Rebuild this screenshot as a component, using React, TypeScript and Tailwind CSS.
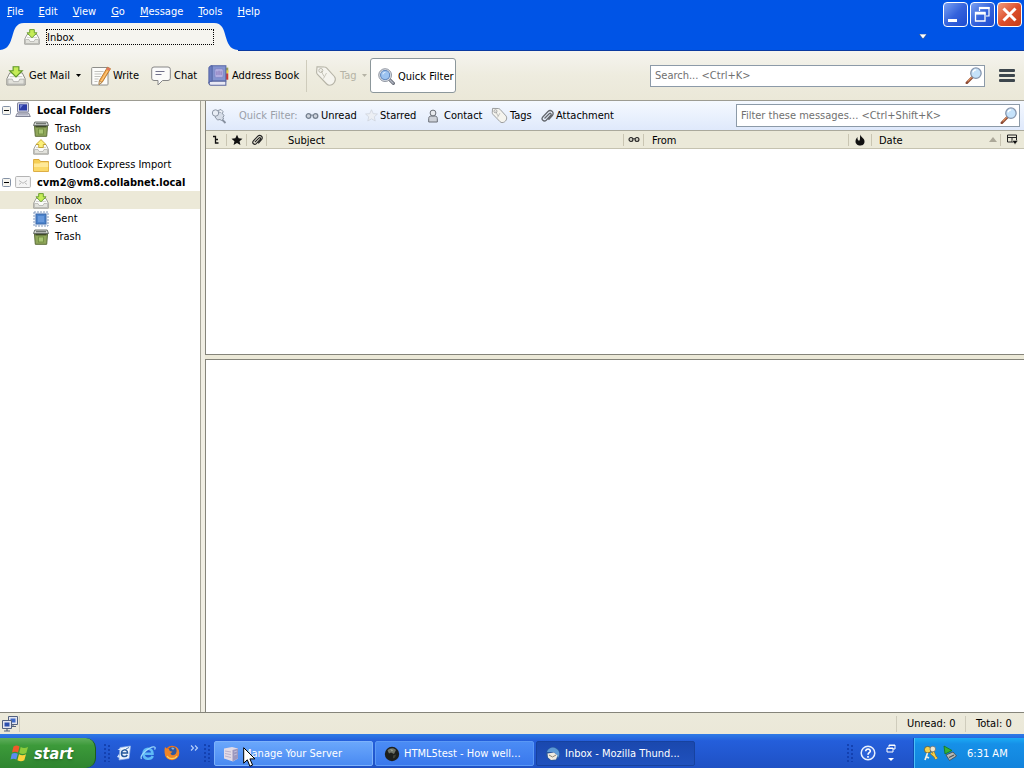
import { ReactNode } from 'react'
import clsx from 'clsx'

type IconProps = { className?: string }

function TrayIcon({ className, up }: IconProps & { up?: boolean }) {
  return (
    <svg viewBox="0 0 16 16" className={clsx('shrink-0', className)} aria-hidden>
      <path d="M3 5.500h10l2.300 4.700v5H.7v-5z" fill="#fafaf8" stroke="#8c8c86" strokeWidth=".8" />
      <path d="M1.500 10.500h3.500l1 2h4l1-2h3.500v4h-13z" fill="#e2e2dc" stroke="#a3a39d" strokeWidth=".6" />
      <path d="M3 8.500h10" stroke="#c4c4be" strokeWidth=".7" />
      {up ? (
        <path d="M8 .6l5 4.900h-2.700v3H5.700v-3H3z" fill="#fbef78" stroke="#bf9a22" strokeWidth=".8" />
      ) : (
        <path d="M5.700.600h4.600v3.200H13L8 8.800 3 3.800h2.700z" fill="#c5ec58" stroke="#5d9626" strokeWidth=".9" />
      )}
    </svg>
  )
}

function TrashIcon({ className }: IconProps) {
  return (
    <svg viewBox="0 0 16 16" className={clsx('shrink-0', className)} aria-hidden>
      <path d="M1.500 5h13l-.8 10.300H2.300z" fill="#8fa65a" stroke="#5b6c38" />
      <path d="M2.500 5.700h11" stroke="#3e4a28" strokeWidth="1.400" />
      <rect x="5.500" y="8" width="5" height="5" fill="#a9c574" stroke="#6d8a3e" strokeWidth=".8" />
      <path d="M.5 4.500L1.800 1h12.400l1.300 3.500z" fill="#d3d6d3" stroke="#5e645e" strokeWidth=".9" />
      <path d="M3 2.700h10" stroke="#666c66" strokeWidth="1.200" />
    </svg>
  )
}

function FolderIcon({ className }: IconProps) {
  return (
    <svg viewBox="0 0 16 16" className={clsx('shrink-0', className)} aria-hidden>
      <path d="M.6 14.400V2.500h5.400l1.500 2h8v9.900z" fill="#f6cf55" stroke="#d6a02d" strokeWidth=".9" />
      <path d="M1 6.500h5.500l1.500-1h7.300V10H1z" fill="#ffe998" />
      <path d="M1 10h14.300v4H1z" fill="#fbd968" />
    </svg>
  )
}

function SentIcon({ className }: IconProps) {
  return (
    <svg viewBox="0 0 16 16" className={clsx('shrink-0', className)} aria-hidden>
      <rect x="1" y="1" width="14" height="14" fill="#eef3fa" stroke="#8098bc" strokeDasharray="2 1" />
      <rect x="3" y="3" width="10" height="10" fill="#4b83cc" stroke="#3a68aa" />
      <rect x="5" y="5" width="6" height="6" fill="#6698dc" />
    </svg>
  )
}

function ComputerIcon({ className }: IconProps) {
  return (
    <svg viewBox="0 0 16 16" className={clsx('shrink-0', className)} aria-hidden>
      <rect x="2.500" y=".8" width="11" height="9.200" rx=".6" fill="#d9dbe8" stroke="#74778e" strokeWidth=".9" />
      <rect x="4" y="2.300" width="8" height="6.200" fill="#2b3ca6" />
      <path d="M5 3h3L5 7z" fill="#6f80d4" />
      <path d="M2.500 11h11l1.800 3.500H.7z" fill="#dcdde6" stroke="#74768a" strokeWidth=".9" />
      <path d="M3 12.800h10" stroke="#9fa1b4" />
    </svg>
  )
}

function EnvelopeIcon({ className }: IconProps) {
  return (
    <svg viewBox="0 0 16 16" className={clsx('shrink-0', className)} aria-hidden>
      <rect x=".6" y="2.500" width="14.800" height="11" rx="1" fill="#f5f5f5" stroke="#b4b4b4" />
      <path d="M4 6.500l4 2.800 4-2.800M4 10.500l2-1.500M12 10.500L10 9" fill="none" stroke="#bcbcbc" />
    </svg>
  )
}

function WriteIcon({ className }: IconProps) {
  return (
    <svg viewBox="0 0 20 20" className={clsx('shrink-0', className)} aria-hidden>
      <rect x=".7" y="1.500" width="16.300" height="17.500" rx=".8" fill="#fcfcfa" stroke="#8e8e8a" />
      <path d="M3.500 5.500h9M3.500 8h7M3.500 10.500h6M3.500 13h4M3.500 15.500h3" stroke="#c2c2be" />
      <path d="M16.500 1.200l3 1.500-8.300 13.600-3.200 2.200.4-3.800z" fill="#f7a848" stroke="#a96a20" strokeWidth=".8" />
      <path d="M16.500 1.200l3 1.500-1.300 2.100-2.900-1.600z" fill="#df7560" />
      <path d="M16.500 5L10 15.500" stroke="#fcd391" strokeWidth=".9" />
      <path d="M8 18.500l.4-3.500 2.600 1.300z" fill="#f6dfb8" stroke="#8a6a40" strokeWidth=".5" />
    </svg>
  )
}

function ChatIcon({ className }: IconProps) {
  return (
    <svg viewBox="0 0 20 20" className={clsx('shrink-0', className)} aria-hidden>
      <path
        d="M3 1h14a2.300 2.300 0 0 1 2.300 2.300v8.900A2.300 2.300 0 0 1 17 14.500h-5.500L7 19v-4.500H3a2.300 2.300 0 0 1-2.300-2.300V3.300A2.300 2.300 0 0 1 3 1z"
        fill="#fbfbfa"
        stroke="#868686"
      />
      <path d="M4.500 5.500h9M4.500 8.500h6" stroke="#70708a" strokeWidth="1.200" />
    </svg>
  )
}

function BookIcon({ className }: IconProps) {
  return (
    <svg viewBox="0 0 20 20" className={clsx('shrink-0', className)} aria-hidden>
      <path d="M16.500 2.500h2.800V7h-2.800z" fill="#9aa05a" />
      <path d="M16.500 5h2.800v3h-2.800z" fill="#ecd53c" />
      <path d="M16.500 8h2.800v6h-2.800z" fill="#cf3b34" />
      <path d="M3 .8h14v14.500H3z" fill="#8494cf" stroke="#5566a6" />
      <path d="M2.500 15.500c-2 0-2 3.700 0 3.700H17v-3.700z" fill="#e9e9f4" stroke="#5c689f" />
      <path d="M.8 2.800C.8 1.500 2 .8 4 .8V15.300C2 15.300.8 16 .8 17.500z" fill="#6b7cbf" stroke="#5061a0" strokeWidth=".8" />
      <rect x="6.500" y="3.500" width="8" height="8.500" rx="1.500" fill="#b2aee0" stroke="#7e84c4" strokeWidth=".7" />
      <path d="M8.500 6v3.500M10.500 5.500v4M12.500 6v3.500" stroke="#8a76b8" strokeWidth=".9" />
    </svg>
  )
}

function TagIcon({ className }: IconProps) {
  return (
    <svg viewBox="0 0 22 22" className={clsx('shrink-0', className)} aria-hidden>
      <path
        d="M2 1.800l7.500.2c1 0 1.600.4 2.300 1.100l7.600 8.400c2.400 3-.2 8.700-5.200 8.700-1 0-1.800-.5-2.500-1.200L2.500 9.500C1.900 8.800 1.600 8.200 1.600 7.300z"
        fill="#f5f4ee"
        stroke="currentColor"
        strokeWidth="1.100"
      />
      <circle cx="5.800" cy="5.500" r="2" fill="none" stroke="currentColor" strokeWidth=".9" />
      <path d="M6 5.500l3 6M11.500 8L8.500 13.500" stroke="currentColor" strokeWidth=".7" />
    </svg>
  )
}

function GlassIcon({ className }: IconProps) {
  return (
    <svg viewBox="0 0 16 16" className={clsx('shrink-0', className)} aria-hidden>
      <path d="M10.500 10.500l4 4" stroke="#6a6f7a" strokeWidth="3" strokeLinecap="round" />
      <path d="M11 11l3.300 3.300" stroke="#b3b8c4" strokeWidth="1.200" strokeLinecap="round" />
      <circle cx="6.700" cy="6.700" r="6" fill="#e2e5ea" stroke="#858c98" strokeWidth=".9" />
      <circle cx="6.700" cy="6.700" r="4.300" fill="#9cc3f0" stroke="#5f86bd" />
      <path d="M4.500 6a2.500 2.500 0 0 1 2.500-2" fill="none" stroke="#dcecfc" />
    </svg>
  )
}

function SearchIcon({ className }: IconProps) {
  return (
    <svg viewBox="0 0 16 16" className={clsx('shrink-0', className)} aria-hidden>
      <path d="M7 9.500L1.700 15" stroke="#8a4a35" strokeWidth="2.400" strokeLinecap="round" />
      <path d="M6.500 9.500l-4 4" stroke="#e08e58" strokeWidth="1" />
      <circle cx="10.300" cy="5.800" r="4.900" fill="#c5e2fa" stroke="#8595ad" strokeWidth="1.200" />
      <path d="M7.500 5a3 3 0 0 1 3-2.200" fill="none" stroke="#fff" strokeWidth="1.200" />
    </svg>
  )
}

function PinIcon({ className }: IconProps) {
  return (
    <svg viewBox="0 0 16 16" className={clsx('shrink-0', className)} aria-hidden>
      <path d="M9.500 10l5 5" stroke="#8791a0" strokeWidth="1.800" />
      <path
        d="M6.500 3.500l4 1 2.500 3-1 2 .5 1.500-2 1.500-1.500-1-2.500.5-2.500-3z"
        fill="#d6dde8"
        stroke="#8b95a4"
      />
      <circle cx="4.500" cy="5" r="3.200" fill="#e8edf5" stroke="#8b95a4" />
      <path d="M7 2.500l3-1 2 2-.5 2" fill="#eef2f8" stroke="#8b95a4" />
    </svg>
  )
}

function GlassesIcon({ className }: IconProps) {
  return (
    <svg viewBox="0 0 14 8" className={clsx('shrink-0', className)} aria-hidden>
      <circle cx="3.500" cy="4" r="2.300" fill="#8884" stroke="currentColor" strokeWidth="1.300" />
      <circle cx="10.500" cy="4" r="2.300" fill="#8884" stroke="currentColor" strokeWidth="1.300" />
      <path d="M5.500 3.500q1.500-1.200 3 0" fill="none" stroke="currentColor" />
    </svg>
  )
}

function StarIcon({ className, outline = 'none' }: IconProps & { outline?: string }) {
  return (
    <svg viewBox="0 0 14 14" className={clsx('shrink-0', className)} aria-hidden>
      <path
        d="M7 .8l1.900 4.200 4.500.4-3.400 3 1 4.500L7 10.600l-4 2.300 1-4.500L.6 5.400 5.100 5z"
        fill="currentColor"
        stroke={outline}
        strokeWidth=".8"
      />
    </svg>
  )
}

function PersonIcon({ className }: IconProps) {
  return (
    <svg viewBox="0 0 12 14" className={clsx('shrink-0', className)} aria-hidden>
      <path d="M1.700 13V9.500c0-1.600 1-2.500 2.300-2.500h4c1.300 0 2.300.9 2.300 2.500V13z" fill="#cdd1d8" stroke="#6a6f77" />
      <circle cx="6" cy="4" r="2.900" fill="#e8eaee" stroke="#6a6f77" />
    </svg>
  )
}

function ClipIcon({ className }: IconProps) {
  return (
    <svg viewBox="0 0 14 14" className={clsx('shrink-0', className)} aria-hidden>
      <path
        d="M4.500 9.500L9.200 4.800c1.200-1.200 2.800.2 1.600 1.500l-4.600 4.900C4 13.300.6 10.600 2.800 8L8 2.500c2.700-2.500 6.500.8 4.500 3.800L8.500 10.800"
        fill="none"
        stroke="currentColor"
        strokeWidth="1.300"
      />
    </svg>
  )
}

function Caret({ className }: IconProps) {
  return (
    <svg viewBox="0 0 5 3" className={clsx('h-[3px] w-[5px] shrink-0', className)} aria-hidden>
      <path d="M0 0h5L2.500 3z" fill="currentColor" />
    </svg>
  )
}

const menus = ['File', 'Edit', 'View', 'Go', 'Message', 'Tools', 'Help']

function CaptionButton({ label, close, children }: { label: string; close?: boolean; children: ReactNode }) {
  return (
    <button
      type="button"
      aria-label={label}
      className={clsx(
        'flex h-[25px] w-[25px] items-center justify-center rounded-[4px] border border-white bg-linear-to-br',
        close ? 'from-[#f09a7c] via-[#dd4f2c] to-[#c33c17]' : 'from-[#7ba0f2] via-[#3563dc] to-[#1c4bd0]',
      )}
    >
      <svg viewBox="0 0 23 23" className="h-[23px] w-[23px]" aria-hidden>
        {children}
      </svg>
    </button>
  )
}

function TitleBar() {
  return (
    <header className="flex h-[51px] justify-between bg-linear-to-t from-[#0a3aa0] from-[1px] to-[#0054e6] to-[1px]">
      <div className="flex flex-col justify-between">
        <nav className="flex h-[22px] items-center gap-[15px] pl-[7px] text-white">
          {menus.map((menu) => (
            <button key={menu} type="button">
              <u>{menu[0]}</u>
              {menu.slice(1)}
            </button>
          ))}
        </nav>
        <div className="flex h-7">
          <svg viewBox="0 0 24 28" className="h-7 w-6" aria-hidden>
            <path d="M0 28V27C17 26 8 0 24 0V28z" fill="#f5f4ef" />
          </svg>
          <button type="button" className="flex w-[190px] items-center gap-[6px] bg-[#f5f4ef] text-left">
            <TrayIcon className="h-4 w-4" />
            <span className="h-4 w-[168px] border border-dotted border-black leading-[15px]">Inbox</span>
          </button>
          <svg viewBox="0 0 24 28" className="h-7 w-6" aria-hidden>
            <path d="M0 0C16 0 7 26 24 27V28H0z" fill="#f5f4ef" />
          </svg>
        </div>
      </div>
      <div className="flex items-start pr-[2px] pt-[2px]">
        <button type="button" aria-label="List all tabs" className="mr-4 mt-8 text-white">
          <svg viewBox="0 0 8 5" className="h-[5px] w-2" aria-hidden>
            <path d="M0 0h8L4 5z" fill="#fff" stroke="#103a80" strokeWidth=".6" />
          </svg>
        </button>
        <div className="flex gap-[2px]">
          <CaptionButton label="Minimize">
            <path d="M4 16h9v3H4z" fill="#fff" />
          </CaptionButton>
          <CaptionButton label="Restore">
            <path d="M8.500 8V4.500h9.500V13H15" fill="none" stroke="#fff" strokeWidth="1.200" />
            <path d="M8 5h10.500" stroke="#fff" strokeWidth="2.200" />
            <path d="M4.500 9.500H14V18H4.500z" fill="none" stroke="#fff" strokeWidth="1.300" />
            <path d="M4 10.500h10.500" stroke="#fff" strokeWidth="2.200" />
          </CaptionButton>
          <CaptionButton label="Close" close>
            <path d="M5.500 5.500l12 12M17.500 5.500l-12 12" stroke="#fff" strokeWidth="3" />
          </CaptionButton>
        </div>
      </div>
    </header>
  )
}

function SearchBox({ label, className }: { label: string; className: string }) {
  return (
    <label className={clsx('flex items-center border border-[#8c9aa8] bg-white pl-[4px] pr-[2px]', className)}>
      <input
        type="search"
        aria-label={label}
        placeholder={label}
        className="min-w-0 flex-1 outline-none placeholder:text-[#707070]"
      />
      <SearchIcon className="h-[17px] w-[17px]" />
    </label>
  )
}

function Toolbar() {
  return (
    <div className="flex h-[50px] items-center border-b border-[#9d9c92] bg-linear-to-b from-[#f5f4ef] via-[#eeecdf] to-[#ebe8d8] pl-[6px] pr-[9px]">
      <button type="button" className="flex w-[70px] items-center gap-[3px]">
        <TrayIcon className="h-5 w-5" />
        Get Mail
      </button>
      <button type="button" aria-label="Get mail options" className="mr-[10px]">
        <Caret />
      </button>
      <button type="button" className="flex w-[60px] items-center gap-[2px]">
        <WriteIcon className="h-5 w-5" />
        Write
      </button>
      <button type="button" className="flex w-[57px] items-center gap-[3px]">
        <ChatIcon className="h-5 w-5" />
        Chat
      </button>
      <button type="button" className="flex w-[98px] items-center gap-[3px] whitespace-nowrap">
        <BookIcon className="h-[21px] w-[21px]" />
        Address Book
      </button>
      <div className="mr-2 h-8 w-px bg-[#cfccbc]" />
      <button type="button" disabled className="flex w-[55px] items-center gap-[3px] text-[#b5b3a6]">
        <TagIcon className="h-[22px] w-[22px]" />
        <span className="mr-[2px]">Tag</span>
        <Caret />
      </button>
      <button
        type="button"
        aria-pressed="true"
        className="flex h-[35px] w-[86px] items-center gap-[3px] whitespace-nowrap rounded-[3px] border border-[#8c979b] bg-white pl-[7px] pt-px"
      >
        <GlassIcon className="h-[17px] w-[17px]" />
        Quick Filter
      </button>
      <SearchBox label="Search... &lt;Ctrl+K&gt;" className="ml-auto h-[22px] w-[335px]" />
      <button type="button" aria-label="Menu" className="ml-[14px] flex w-4 flex-col gap-[2px]">
        <span className="h-[3px] w-full rounded-[1px] bg-[#3d464d]" />
        <span className="h-[3px] w-full rounded-[1px] bg-[#3d464d]" />
        <span className="h-[3px] w-full rounded-[1px] bg-[#3d464d]" />
      </button>
    </div>
  )
}

const accounts = [
  {
    name: 'Local Folders',
    icon: <ComputerIcon className="h-4 w-4" />,
    folders: [
      { name: 'Trash', icon: <TrashIcon className="h-4 w-4" /> },
      { name: 'Outbox', icon: <TrayIcon up className="h-4 w-4" /> },
      { name: 'Outlook Express Import', icon: <FolderIcon className="h-4 w-4" /> },
    ],
  },
  {
    name: 'cvm2@vm8.collabnet.local',
    icon: <EnvelopeIcon className="h-4 w-4" />,
    folders: [
      { name: 'Inbox', icon: <TrayIcon className="h-4 w-4" />, selected: true },
      { name: 'Sent', icon: <SentIcon className="h-4 w-4" /> },
      { name: 'Trash', icon: <TrashIcon className="h-4 w-4" /> },
    ],
  },
]

function FolderPane() {
  return (
    <aside className="w-[201px] shrink-0 border-r border-[#a5a497] bg-white">
      {accounts.map((account) => (
        <section key={account.name}>
          <div className="flex h-[18px] items-center pl-[2px]">
            <button type="button" aria-label={`Collapse ${account.name}`} className="mr-1">
              <svg viewBox="0 0 9 9" className="h-[9px] w-[9px]" aria-hidden>
                <rect x=".5" y=".5" width="8" height="8" rx="1" fill="#f6f5ef" stroke="#8492a6" />
                <path d="M2 4.500h5" stroke="#000" />
              </svg>
            </button>
            {account.icon}
            <span className="ml-[6px] whitespace-nowrap pt-px font-bold">{account.name}</span>
          </div>
          <ul>
            {account.folders.map((folder) => (
              <li
                key={folder.name}
                className={clsx(
                  'flex h-[18px] items-center gap-[6px] pl-[33px] pt-px',
                  'selected' in folder && 'bg-[#ece9d8]',
                )}
              >
                {folder.icon}
                {folder.name}
              </li>
            ))}
          </ul>
        </section>
      ))}
    </aside>
  )
}

function QuickFilterBar() {
  return (
    <div className="flex h-[29px] items-center bg-linear-to-b from-[#f5f9ff] to-[#dfe9fb] pl-[5px] pr-1">
      <button type="button" aria-label="Keep filters applied" className="mr-3">
        <PinIcon className="h-4 w-4" />
      </button>
      <span className="w-[66px] whitespace-nowrap text-[#9a9fa8]">Quick Filter:</span>
      <button type="button" className="flex w-[60px] items-center gap-[2px]">
        <GlassesIcon className="h-2 w-[14px] text-[#75808f]" />
        Unread
      </button>
      <button type="button" className="flex w-[62px] items-center gap-[2px]">
        <StarIcon className="h-[13px] w-[13px] text-[#eceff4]" outline="#cdd3dc" />
        Starred
      </button>
      <button type="button" className="flex w-16 items-center gap-[5px]">
        <PersonIcon className="h-[14px] w-3" />
        Contact
      </button>
      <button type="button" className="flex w-[49px] items-center gap-[2px]">
        <TagIcon className="h-[17px] w-[17px] text-[#8d8f90]" />
        Tags
      </button>
      <button type="button" className="flex items-center gap-[2px]">
        <ClipIcon className="h-[14px] w-[14px] text-[#63676d]" />
        Attachment
      </button>
      <SearchBox label="Filter these messages... &lt;Ctrl+Shift+K&gt;" className="ml-auto h-[23px] w-[284px]" />
    </div>
  )
}

function HeadCell({ label, className, children }: { label?: string; className: string; children: ReactNode }) {
  return (
    <th aria-label={label} className={clsx('p-0 text-left font-normal', className)}>
      <div className="flex h-3 items-center border-r border-[#c9c5b2]">{children}</div>
    </th>
  )
}

function MessageList() {
  return (
    <table className="w-full table-fixed border-collapse">
      <thead>
        <tr className="h-[18px] border-b border-t border-b-[#c5c2b0] border-t-[#aaa99c] bg-[#ebe9d9]">
          <HeadCell label="Thread" className="w-[21px]">
            <svg viewBox="0 0 8 10" className="mx-auto h-[10px] w-2" aria-hidden>
              <path d="M1 1.500h2.500v6.500h3M3.500 4.500h2.500" fill="none" stroke="#111" strokeWidth="1.300" />
            </svg>
          </HeadCell>
          <HeadCell label="Starred" className="w-5">
            <StarIcon className="mx-auto h-3 w-3 text-[#111111]" />
          </HeadCell>
          <HeadCell label="Attachments" className="w-5">
            <ClipIcon className="mx-auto h-3 w-3 text-[#222222]" />
          </HeadCell>
          <HeadCell className="pl-[21px]">
            <span className="pt-[2px]">Subject</span>
          </HeadCell>
          <HeadCell label="Read" className="w-5">
            <GlassesIcon className="mx-auto h-[7px] w-3 text-[#222222]" />
          </HeadCell>
          <HeadCell className="w-[205px] pl-2">
            <span className="pt-[2px]">From</span>
          </HeadCell>
          <HeadCell label="Junk" className="w-[23px]">
            <svg viewBox="0 0 10 12" className="mx-auto h-3 w-[10px]" aria-hidden>
              <path
                d="M5.500.5C5.500 3 9.500 4 9.500 7.500S7 11.500 5 11.500.5 10 .5 7.500C.5 6 1 4.500 2.500 3 2.300 5 2.800 6.500 4 6.800 5.800 6 4.500 3 5.500.5z"
                fill="#111"
              />
            </svg>
          </HeadCell>
          <HeadCell className="w-[129px] pl-[7px]">
            <span className="pt-[2px]">Date</span>
            <svg viewBox="0 0 8 5" className="ml-auto mr-[3px] h-[5px] w-2" aria-hidden>
              <path d="M4 0l4 5H0z" fill="#aca899" />
            </svg>
          </HeadCell>
          <th className="w-[23px] p-0">
            <button type="button" aria-label="Select columns to display" className="flex w-full justify-center">
              <svg viewBox="0 0 11 11" className="h-[11px] w-[11px]" aria-hidden>
                <path d="M.5 1h9v7h-9zM.5 3.500h9M5 3v5" fill="none" stroke="#222" />
                <path d="M5 6.500h6L8 10.500z" fill="#111" stroke="#ebe9d9" strokeWidth=".5" />
              </svg>
            </button>
          </th>
        </tr>
      </thead>
      <tbody />
    </table>
  )
}

function StatusBar() {
  return (
    <footer className="flex h-[22px] items-center border-t border-[#85847a] bg-linear-to-b from-[#eceadb] to-[#ebe8d8]">
      <div className="flex h-4 w-5 items-center border-r border-[#cfccbc] pl-[2px]">
        <svg viewBox="0 0 16 16" className="h-4 w-4" aria-hidden>
          <path d="M6.500.5h9v8h-9z" fill="#e4e6f0" stroke="#52607e" />
          <path d="M8.500 2.500h5v4h-5z" fill="#3e69c8" />
          <path d="M9 10.500h5M11 9v1.500" stroke="#52607e" />
          <path d="M.5 4.500h9v8h-9z" fill="#e4e6f0" stroke="#52607e" />
          <path d="M2.500 6.500h5v4h-5z" fill="#2c4fae" />
          <path d="M2 15h6M5 13v2" stroke="#52607e" strokeWidth="1.200" />
        </svg>
      </div>
      <div className="ml-auto flex h-4 w-[69px] items-center whitespace-nowrap border-l border-[#cfccbc] pl-[10px]">
        Unread: 0
      </div>
      <div className="flex h-4 w-[59px] items-center whitespace-nowrap border-l border-[#cfccbc] pl-[10px]">Total: 0</div>
    </footer>
  )
}

function Grip() {
  return (
    <svg viewBox="0 0 6 18" className="h-[18px] w-[6px] shrink-0" aria-hidden>
      <path d="M1 0v18M5 1v17" stroke="#0f3aa6" strokeWidth="1.500" strokeDasharray="2 2" />
    </svg>
  )
}

function TaskButton({ title, className, children }: { title: string; className: string; children: ReactNode }) {
  return (
    <button
      type="button"
      className={clsx('flex h-[25px] w-[159px] items-center gap-1 whitespace-nowrap rounded-[2px] border pl-2 pt-px', className)}
    >
      <svg viewBox="0 0 16 16" className="h-4 w-4 shrink-0" aria-hidden>
        {children}
      </svg>
      {title}
    </button>
  )
}

function Taskbar() {
  return (
    <div className="flex h-[34px] items-end bg-linear-to-b from-[#2f7be6] via-[#245edb] via-20% to-[#1f51c4] text-white">
      <button
        type="button"
        className="flex h-[30px] w-24 items-center gap-[5px] rounded-r-[10px] border-r border-[#1d5c1c] bg-linear-to-b from-[#5fae5c] via-[#3c9a3a] via-25% to-[#2f8530] pl-[10px] text-[16px] font-bold italic text-shadow-md"
      >
        <svg viewBox="-1 0 19 18" className="h-[18px] w-[19px]" aria-hidden>
          <path d="M2.500 2.500Q5.500.5 8.500 2.500L7 8.500Q4 6.800 1 8.500z" fill="#f0592a" />
          <path d="M9.700 3Q13 5 17 3L15.300 9Q12 11 8.200 9z" fill="#8ccb3c" />
          <path d="M.8 9.800Q3.800 8 6.800 9.800L5.300 15.500Q2.500 14-.5 15.500z" fill="#5b8cf0" />
          <path d="M8 10.300Q11.500 12.300 15 10.300L13.300 16.300Q10 18.300 6.400 16.300z" fill="#fbd23c" />
        </svg>
        start
      </button>
      <div className="flex h-[30px] flex-1 items-center">
        <div className="flex w-[118px] items-center pl-2">
          <Grip />
          <button type="button" aria-label="Outlook Express" className="ml-[6px]">
            <svg viewBox="0 0 16 16" className="h-4 w-4" aria-hidden>
              <path d="M4 2.500L14.500 1 13 13.500 3 15z" fill="#eef5fd" stroke="#8fb2e6" strokeWidth=".7" />
              <path d="M1.500 5l3-2 1 2zM1 12l2-3 1 4z" fill="#d5e6fb" />
              <path d="M6 8h5.500c0-4.500-6-4-6 .5 0 4 4.500 3.500 5.800 1.500" fill="none" stroke="#255a9c" strokeWidth="1.500" />
              <path d="M10 4l3-1.500" stroke="#4b79b8" />
            </svg>
          </button>
          <button type="button" aria-label="Internet Explorer" className="ml-2">
            <svg viewBox="0 0 16 16" className="h-4 w-4" aria-hidden>
              <path d="M4 8.700h8.500c0-6.700-9-6.700-9 0 0 6.300 7.500 6.300 9.300 2.300" fill="none" stroke="#5fbaf6" strokeWidth="2.600" />
              <path d="M1.500 14C-1 10.500 10 1 14.500 2c1.500.5 0 2.500 0 2.500" fill="none" stroke="#9cd9fc" strokeWidth="1.200" />
            </svg>
          </button>
          <button type="button" aria-label="Firefox" className="ml-2">
            <svg viewBox="0 0 16 16" className="h-4 w-4" aria-hidden>
              <circle cx="8" cy="8" r="7.200" fill="#e9701c" />
              <circle cx="8.500" cy="6.500" r="4.600" fill="#2f579e" />
              <path d="M7 3q2-1 3.500.5L9 5z" fill="#7fb2e4" />
              <path
                d="M1 2l2 1.800L5 4l.8 2 2.700.7L6.500 8.500c1 2.700 5 2 5.800-1C13 5 12.500 3 11 1.500 15 2.500 16.700 8 13.700 12 10 16.300 3 15.500 1.200 10.500.3 7.500.3 4 1 2z"
                fill="#ef8427"
              />
              <path d="M3 11c2 3.500 8 3.500 10 0" fill="none" stroke="#fcd25a" strokeWidth="1.200" />
            </svg>
          </button>
          <button type="button" aria-label="More shortcuts" className="mb-[10px] ml-[10px]">
            <svg viewBox="0 0 9 6" className="h-[6px] w-[9px]" aria-hidden>
              <path d="M1 .5L3.500 3 1 5.500M5 .5L7.500 3 5 5.500" fill="none" stroke="#b9d2fa" strokeWidth="1.100" />
            </svg>
          </button>
          <div className="ml-[5px]">
            <Grip />
          </div>
        </div>
        <div className="relative flex gap-[2px]">
          <TaskButton title="Manage Your Server" className="border-[#7db2fb] bg-linear-to-b from-[#6aa7fb] to-[#4a8af2]">
            <path d="M1 2.500l8-1.500 6 1.500v10l-5 3-9-3z" fill="#e2dbe6" />
            <path d="M9.500 4L15 2.500v10l-5.500 3z" fill="#9c98be" />
            <path d="M2 5l6 1M2 7.500l6 1.200M2 10l6 1.500" stroke="#b9b1cc" />
            <path d="M11 6l3-1M11 9l3-1" stroke="#c9c6e0" strokeWidth=".8" />
          </TaskButton>
          <TaskButton title="HTML5test - How well..." className="border-[#5a98f5] bg-linear-to-b from-[#4b8cf5] to-[#3a78ec]">
            <circle cx="8" cy="8" r="7.200" fill="#1d1f1c" />
            <path d="M3.500 4.500c2-3 6.500-3 8.500-.5l-2 4-3-1.500-2 1z" fill="#6d7267" />
            <path d="M6 3l3 1-1 1.500z" fill="#a4aa9c" />
            <path d="M9 9.500l3-1-1 3-2 1z" fill="#3d4038" />
          </TaskButton>
          <TaskButton title="Inbox - Mozilla Thund..." className="border-[#17429f] bg-linear-to-b from-[#1a48ae] to-[#2051bd]">
            <circle cx="8" cy="8" r="7" fill="#28579e" />
            <path d="M2 6C3 2 8 .5 11 2.500c4 2 4 7 2 9.500-1-3-3-6-6-6z" fill="#5c9ad6" />
            <path d="M2.500 7.500L9 6.500l3.500 3-1.500 4-5 .5-3-2.500z" fill="#f0ece0" />
            <path d="M4 9l3.500 2L11 9" fill="none" stroke="#8d8674" />
          </TaskButton>
          <svg viewBox="0 0 13 21" className="absolute left-[29px] top-[6px] h-[21px] w-[13px]" aria-hidden>
            <path d="M.7.700v15.500l3.600-3.400 2.600 6.400 2.700-1.100-2.700-6.200h5z" fill="#fff" stroke="#000" />
          </svg>
        </div>
        <div className="ml-auto flex items-center">
          <Grip />
          <button type="button" aria-label="Help" className="ml-[7px]">
            <svg viewBox="0 0 16 16" className="h-4 w-4" aria-hidden>
              <circle cx="8" cy="8" r="6.800" fill="#2c62d8" stroke="#e8f0fe" strokeWidth="1.500" />
              <path
                d="M5.700 6.300C5.700 3.200 10.400 3.400 10.300 6.200 10.200 7.800 8 7.700 8 9.700M8 11v1.700"
                fill="none"
                stroke="#fff"
                strokeWidth="1.600"
              />
            </svg>
          </button>
          <button type="button" aria-label="Language bar options" className="ml-[10px] mr-[17px]">
            <svg viewBox="0 0 10 18" className="h-[18px] w-[10px]" aria-hidden>
              <path d="M3 3V1h6v4H7M1 4h6v4H1z" fill="none" stroke="#fff" />
              <path d="M3 1.500h6M1 4.500h6" stroke="#fff" />
              <path d="M2 14h6l-3 3z" fill="#fff" />
            </svg>
          </button>
        </div>
        <div className="flex h-[30px] w-[111px] items-center border-l border-[#0d4bb5] bg-linear-to-b from-[#1cabf4] via-[#1690e8] via-20% to-[#1283dc] pl-[9px] shadow-[inset_1px_0_0_#4cc0f8]">
          <svg viewBox="0 0 16 16" className="h-4 w-4" aria-hidden>
            <path d="M8 8l6 5.500M9.500 5L13 14" stroke="#8a6a1e" strokeWidth="2.400" />
            <path d="M8 8l6 5.500M9.500 5L13 14" stroke="#f6cf4a" strokeWidth="1.500" />
            <circle cx="4.700" cy="4.700" r="3.300" fill="#f4d24f" stroke="#5d4a23" strokeWidth=".7" />
            <circle cx="9.800" cy="4" r="2.800" fill="#efe7cf" stroke="#666" strokeWidth=".7" />
            <path d="M4.500 8l-2.500 7M4 12l2 1" stroke="#f4efe0" strokeWidth="1.700" />
          </svg>
          <svg viewBox="0 0 16 16" className="ml-[3px] h-4 w-4" aria-hidden>
            <path d="M4 10l7-3 3.500 4L7.500 15.500z" fill="#b6bab8" stroke="#42464a" strokeWidth=".8" />
            <path d="M7 12.500l5-2.500" stroke="#4d5254" strokeWidth="1.200" />
            <path d="M2 1l8 4.500L3 9z" fill="#36b336" stroke="#14731c" strokeWidth=".8" />
          </svg>
          <span className="ml-[9px] whitespace-nowrap pt-px">6:31 AM</span>
        </div>
      </div>
    </div>
  )
}

export default function App() {
  return (
    <div className="flex min-h-screen flex-col overflow-hidden bg-[#ece9d8] font-[Tahoma,'DejaVu_Sans_Condensed','DejaVu_Sans',sans-serif] text-[11px] leading-[15px] text-black">
      <TitleBar />
      <Toolbar />
      <main className="flex flex-1">
        <FolderPane />
        <div className="w-1 shrink-0 bg-[#f0eee3]" />
        <div className="flex min-w-0 flex-1 flex-col gap-1">
          <section className="h-[254px] border-b border-l border-[#85847a] bg-white">
            <QuickFilterBar />
            <MessageList />
          </section>
          <section className="flex-1 border-l border-t border-[#85847a] bg-white" />
        </div>
      </main>
      <StatusBar />
      <Taskbar />
    </div>
  )
}
